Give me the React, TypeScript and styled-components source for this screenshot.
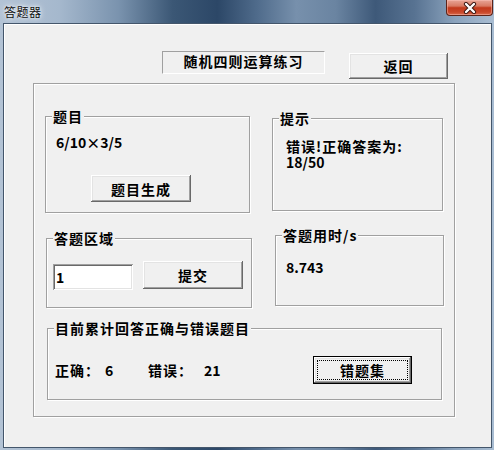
import React from "react";
import styled, { createGlobalStyle } from "styled-components";

const FONT = `"Noto Sans CJK SC", "Liberation Sans", sans-serif`;

const Global = createGlobalStyle`
  html, body { margin: 0; padding: 0; background: #ffffff; }
  body { width: 494px; height: 450px; overflow: hidden; }
`;

const Window = styled.div`
  width: 494px;
  height: 450px;
  box-sizing: border-box;
  display: flex;
  flex-direction: column;
  padding: 0 2px 2px 3px;
  font-family: ${FONT};
  background: linear-gradient(
    90deg,
    #b3c3d5 0%,
    #a5b8cd 12%,
    #7a93ae 24%,
    #3b5775 35%,
    #2c4767 44%,
    #4f6b8b 52%,
    #7790ac 60%,
    #6a84a1 68%,
    #3e5979 76%,
    #587392 84%,
    #8aa2bc 92%,
    #a9bdd2 100%
  );
`;

const TitleBar = styled.div`
  height: 23px;
  display: flex;
  align-items: flex-start;
  justify-content: space-between;
  margin: 0 -2px 0 0;
`;

const TitleText = styled.span`
  font-size: 12px;
  line-height: 23px;
  color: #111;
  letter-spacing: 0.5px;
  text-shadow: 0 0 6px rgba(255, 255, 255, 0.95), 0 0 3px rgba(255, 255, 255, 0.9);
  padding-left: 1px;
`;

const CloseButton = styled.div`
  width: 47px;
  height: 16px;
  box-sizing: border-box;
  margin-right: 1px;
  border: 1px solid #5d2419;
  border-top: none;
  border-radius: 0 0 4px 4px;
  background: linear-gradient(180deg, #e8a596 0%, #d97a63 40%, #c2391b 52%, #c9472a 80%, #d86a4c 100%);
  box-shadow: inset 0 0 0 1px rgba(255, 200, 190, 0.45);
  display: flex;
  align-items: center;
  justify-content: center;
`;

const Client = styled.div`
  flex: 1;
  box-sizing: border-box;
  border: 1px solid #44566b;
  background: #f0f0f0;
  box-shadow: inset 1px 1px 0 #ffffff;
  display: flex;
  flex-direction: column;
`;

const Header = styled.div`
  display: flex;
  align-items: flex-start;
  padding: 27px 0 0 158px;
`;

const Banner = styled.div`
  width: 163px;
  height: 23px;
  box-sizing: border-box;
  border-top: 1px solid #a0a0a0;
  border-left: 1px solid #a0a0a0;
  border-right: 1px solid #ffffff;
  border-bottom: 1px solid #ffffff;
  font-weight: 700;
  font-size: 14px;
  line-height: 18px;
  letter-spacing: 1px;
  text-align: center;
  color: #000;
`;

const Button = styled.button<{ $w: number; $h: number; $mt?: number; $ml?: number; $default?: boolean }>`
  position: relative;
  box-sizing: border-box;
  width: ${(p) => p.$w}px;
  height: ${(p) => p.$h}px;
  margin-top: ${(p) => p.$mt ?? 0}px;
  margin-left: ${(p) => p.$ml ?? 0}px;
  padding: 0;
  flex-shrink: 0;
  background: #f0f0f0;
  color: #000;
  font-family: ${FONT};
  font-weight: 700;
  font-size: 14px;
  line-height: 1;
  letter-spacing: 1px;
  border: ${(p) => (p.$default ? "1px solid #000" : "none")};
  box-shadow: inset -1px -1px 0 #696969, inset 1px 1px 0 #ffffff, inset -2px -2px 0 #a0a0a0,
    inset 2px 2px 0 #e3e3e3;
  &::after {
    content: "";
    display: ${(p) => (p.$default ? "block" : "none")};
    position: absolute;
    inset: 3px;
    border: 1px dotted #000;
  }
`;

const Outer = styled.div`
  box-sizing: border-box;
  width: 422px;
  height: 334px;
  margin: 4px 0 0 29px;
  border: 1px solid #a0a0a0;
  box-shadow: inset 1px 1px 0 #ffffff, 1px 1px 0 #ffffff;
  display: flex;
  flex-direction: column;
`;

const Row = styled.div`
  display: flex;
  align-items: flex-start;
`;

const Group = styled.div<{ $w: number; $h: number; $mt: number; $ml: number; $pt: number; $pl: number }>`
  position: relative;
  box-sizing: border-box;
  width: ${(p) => p.$w}px;
  height: ${(p) => p.$h}px;
  margin-top: ${(p) => p.$mt}px;
  margin-left: ${(p) => p.$ml}px;
  padding: ${(p) => p.$pt}px 0 0 ${(p) => p.$pl}px;
  border: 1px solid #a0a0a0;
  box-shadow: inset 1px 1px 0 #ffffff, 1px 1px 0 #ffffff;
  display: flex;
  flex-direction: column;
  align-items: flex-start;
`;

const Caption = styled.span`
  position: absolute;
  top: -9px;
  left: 6px;
  padding: 0 1px;
  background: #f0f0f0;
  font-weight: 700;
  font-size: 14px;
  line-height: 16px;
  letter-spacing: 1px;
  color: #000;
  white-space: nowrap;
`;

const Text = styled.div<{ $ls?: number }>`
  font-weight: 700;
  font-size: 14px;
  line-height: 16px;
  letter-spacing: ${(p) => p.$ls ?? 1}px;
  color: #000;
  white-space: nowrap;
`;

const Digits = styled.span`
  letter-spacing: 0;
`;

const InputRow = styled.div`
  display: flex;
  align-items: flex-start;
`;

const Field = styled.input`
  box-sizing: border-box;
  width: 80px;
  height: 26px;
  margin-top: 3px;
  padding: 0 0 0 3px;
  border: none;
  outline: none;
  background: #ffffff;
  font-family: ${FONT};
  font-weight: 700;
  font-size: 14px;
  color: #000;
  box-shadow: inset 1px 1px 0 #a0a0a0, inset -1px -1px 0 #ffffff, inset 2px 2px 0 #696969,
    inset -2px -2px 0 #e3e3e3;
`;

const StatRow = styled.div`
  display: flex;
  align-items: center;
`;

const Stat = styled.span<{ $w: number; $ls?: number }>`
  width: ${(p) => p.$w}px;
  flex-shrink: 0;
  font-weight: 700;
  font-size: 14px;
  line-height: 16px;
  letter-spacing: ${(p) => p.$ls ?? 1}px;
  color: #000;
  white-space: nowrap;
`;

export default function App() {
  return (
    <>
      <Global />
      <Window>
        <TitleBar>
          <TitleText>答题器</TitleText>
          <CloseButton>
            <svg width="14" height="12" viewBox="0 0 14 12">
              <path d="M3 2 L11 10 M11 2 L3 10" stroke="#3a1510" strokeWidth="4.2" strokeLinecap="round" />
              <path d="M3 2 L11 10 M11 2 L3 10" stroke="#ffffff" strokeWidth="2.4" strokeLinecap="round" />
            </svg>
          </CloseButton>
        </TitleBar>
        <Client>
          <Header>
            <Banner>随机四则运算练习</Banner>
            <Button $w={99} $h={26} $mt={2} $ml={24}>返回</Button>
          </Header>
          <Outer>
            <Row>
              <Group $w={205} $h={97} $mt={32} $ml={11} $pt={17} $pl={10}>
                <Caption>题目</Caption>
                <Text $ls={0}>6/10×3/5</Text>
                <Button $w={100} $h={27} $mt={25} $ml={35}>题目生成</Button>
              </Group>
              <Group $w={171} $h={93} $mt={34} $ml={22} $pt={19} $pl={13}>
                <Caption>提示</Caption>
                <Text>
                  错误!正确答案为:
                  <br />
                  <Digits>18/50</Digits>
                </Text>
              </Group>
            </Row>
            <Row>
              <Group $w={206} $h={70} $mt={25} $ml={12} $pt={22} $pl={6}>
                <Caption>答题区域</Caption>
                <InputRow>
                  <Field defaultValue="1" />
                  <Button $w={100} $h={28} $ml={10}>提交</Button>
                </InputRow>
              </Group>
              <Group $w={169} $h={71} $mt={22} $ml={23} $pt={23} $pl={10}>
                <Caption>答题用时/s</Caption>
                <Text $ls={0}>8.743</Text>
              </Group>
            </Row>
            <Row>
              <Group $w={395} $h={72} $mt={20} $ml={13} $pt={27} $pl={7}>
                <Caption>目前累计回答正确与错误题目</Caption>
                <StatRow>
                  <Stat $w={50}>正确：</Stat>
                  <Stat $w={43} $ls={0}>6</Stat>
                  <Stat $w={56}>错误：</Stat>
                  <Stat $w={109} $ls={0}>21</Stat>
                  <Button $w={99} $h={28} $default>错题集</Button>
                </StatRow>
              </Group>
            </Row>
          </Outer>
        </Client>
      </Window>
    </>
  );
}
